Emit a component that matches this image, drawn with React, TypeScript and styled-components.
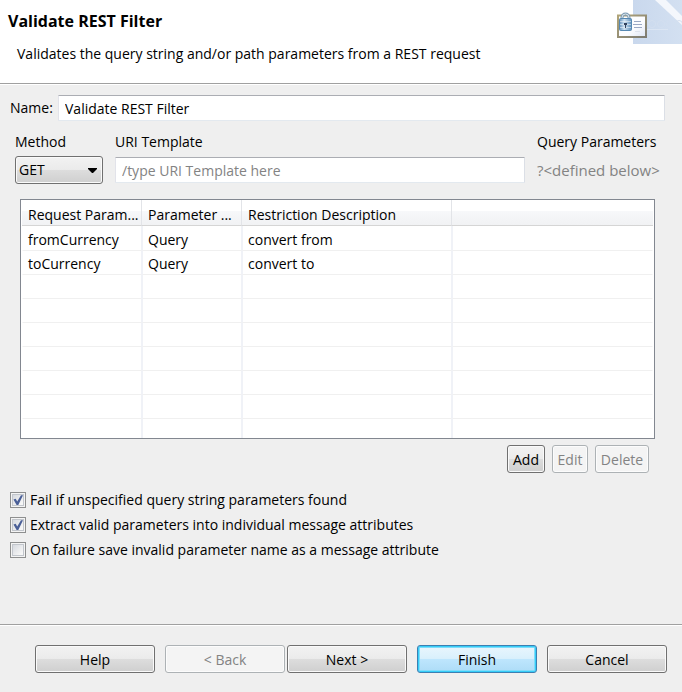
import React, { useState } from 'react';
import styled, { createGlobalStyle, css } from 'styled-components';

const GlobalStyle = createGlobalStyle`
  *, *::before, *::after { box-sizing: border-box; }
  body {
    margin: 0;
    background: #efefef;
    color: #000;
    font-family: 'Open Sans', 'Noto Sans', sans-serif;
    font-size: 14px;
    line-height: 20px;
  }
  button, input, select { font: inherit; color: inherit; margin: 0; }
`;

const Dialog = styled.main`
  display: flex;
  flex-direction: column;
  min-height: 100vh;
`;

const Header = styled.header`
  display: flex;
  justify-content: space-between;
  height: 84px;
  padding-left: 8px;
  background: #fff;
  border-bottom: 1px solid #a0a0a0;
`;

const Title = styled.h1`
  margin: 11px 0 13px;
  font-size: 16px;
  line-height: 20px;
  font-weight: 700;
`;

const Summary = styled.p`
  margin: 0;
  padding-left: 9px;
`;

const Banner = styled.svg`
  flex: none;
  width: 66px;
  height: 46px;
`;

const Content = styled.form`
  flex: 1;
  padding: 10px 0;
  border-top: 1px solid #fff;
`;

const TextField = styled.input`
  width: 100%;
  min-width: 0;
  height: 26px;
  padding: 0 6px;
  background: #fff;
  border: 1px solid #e2e3ea;
  border-top-color: #abadb3;
  border-right-color: #dbdfe6;
  border-bottom-color: #e3e9ef;
  border-radius: 1px;
  outline: none;
  &::placeholder { color: #838383; opacity: 1; }
`;

const NameRow = styled.div`
  display: flex;
  align-items: center;
  padding: 0 17px 0 10px;
`;

const NameLabel = styled.label`
  flex: none;
  width: 48px;
`;

const RequestGrid = styled.div`
  display: grid;
  grid-template-columns: 88px 1fr 128px;
  column-gap: 12px;
  row-gap: 4px;
  align-items: center;
  padding: 11px 17px 0 15px;
`;

const QueryHint = styled.span`
  font-size: 15px;
  color: #838383;
  white-space: nowrap;
`;

const glossy = css`
  background: linear-gradient(#f2f2f2 0, #ebebeb 48%, #dddddd 50%, #cfcfcf 100%);
  border: 1px solid #707070;
  box-shadow: inset 0 0 0 1px #fafafa;
`;

const SelectBox = styled.div`
  position: relative;
`;

const Select = styled.select`
  display: block;
  width: 100%;
  height: 28px;
  padding: 0 24px 0 3px;
  appearance: none;
  border-radius: 3px;
  outline: none;
  ${glossy}
`;

const SelectArrow = styled.svg`
  position: absolute;
  right: 6px;
  top: 12px;
  pointer-events: none;
`;

const TableFrame = styled.div`
  margin: 15px 27px 0 20px;
  padding: 0 1px;
  height: 240px;
  overflow: hidden;
  background: #fff;
  border: 1px solid #828790;
`;

const Table = styled.table`
  width: 100%;
  table-layout: fixed;
  border-collapse: separate;
  border-spacing: 0;
`;

const Column = styled.col<{ $width?: number }>`
  width: ${({ $width }) => ($width ? `${$width}px` : 'auto')};
`;

const HeadCell = styled.th`
  height: 26px;
  padding: 5px 0 0 6px;
  font-weight: 400;
  text-align: left;
  white-space: nowrap;
  background: linear-gradient(#fff 0, #fff 42%, #f7f8fa 44%, #f1f2f4 100%);
  border-right: 1px solid #e2e4e8;
  border-bottom: 1px solid #d5d5d5;
  &:last-child { border-right: 0; }
`;

const BodyCell = styled.td`
  height: 24px;
  padding: 3px 5px 0;
  border-left: 1px solid #f0f2f7;
  border-right: 1px solid #f0f2f7;
  border-bottom: 1px solid #f0f0f0;
  &:first-child { border-left-color: #fff; }
  &:last-child { border-right-color: #fff; }
  tr:first-child > & { height: 25px; padding-top: 4px; }
`;

const TableActions = styled.div`
  display: flex;
  justify-content: flex-end;
  gap: 7px;
  padding: 6px 33px 0 0;
`;

const Button = styled.button<{ $width: number; $primary?: boolean }>`
  flex: 0 1 ${({ $width }) => $width}px;
  height: 28px;
  padding: 2px 0 0;
  border-radius: 3px;
  outline: none;
  white-space: nowrap;
  ${glossy}
  ${({ $primary }) =>
    $primary &&
    css`
      background: linear-gradient(#e9f6fd 0, #d9f0fc 48%, #bee6fd 50%, #addcf7 100%);
      border-color: #3c7fb1;
      box-shadow: inset 0 0 0 1px #35cdf8, inset 0 0 0 2px #7fdcfa;
    `}
  &:disabled {
    color: #838383;
    background: #f4f4f4;
    border-color: #adb2b5;
    box-shadow: inset 0 0 0 1px #fcfcfc;
  }
`;

const Options = styled.div`
  display: flex;
  flex-direction: column;
  align-items: flex-start;
  gap: 5px;
  padding: 17px 10px 0;
`;

const Option = styled.label`
  display: flex;
  align-items: center;
  gap: 4px;
`;

const TickBox = styled.span`
  display: grid;
  flex: none;
  width: 16px;
  height: 16px;
  > * { grid-area: 1 / 1; }
`;

const Checkbox = styled.input`
  appearance: none;
  width: 16px;
  height: 16px;
  background: linear-gradient(135deg, #cfd3da, #f6f6f6 75%);
  border: 1px solid #8e8f8f;
  box-shadow: inset 0 0 0 1px #f4f4f4, inset 0 0 0 2px #c2c6cc;
  & + svg { visibility: hidden; pointer-events: none; }
  &:checked + svg { visibility: visible; }
`;

const Footer = styled.footer`
  display: flex;
  justify-content: flex-end;
  gap: 10px;
  height: 68px;
  padding: 20px 15px 0 35px;
  border-top: 1px solid #a0a0a0;
  box-shadow: inset 0 1px 0 #fff;
`;

const StepButtons = styled.div`
  display: flex;
  flex: 0 1 242px;
  gap: 2px;
`;

const parameters = [
  { name: 'fromCurrency', type: 'Query', restriction: 'convert from' },
  { name: 'toCurrency', type: 'Query', restriction: 'convert to' },
];
const blankRows = [0, 1, 2, 3, 4, 5, 6];

function FilterIcon() {
  return (
    <Banner viewBox="0 0 66 46" aria-hidden="true">
      <defs>
        <linearGradient id="sky" x1="0" y1="0" x2="1" y2="0">
          <stop offset="0" stopColor="#c9d8ed" />
          <stop offset="1" stopColor="#d3e0f1" />
        </linearGradient>
        <linearGradient id="card" x1="0" y1="0" x2="1" y2="1">
          <stop offset="0" stopColor="#fff" />
          <stop offset="0.6" stopColor="#fbfcff" />
          <stop offset="1" stopColor="#dde5f5" />
        </linearGradient>
        <linearGradient id="frame" x1="0" y1="0" x2="1" y2="1">
          <stop offset="0" stopColor="#b0a478" />
          <stop offset="1" stopColor="#7d7b72" />
        </linearGradient>
        <linearGradient id="lock" x1="0" y1="0" x2="1" y2="0">
          <stop offset="0" stopColor="#6593bd" />
          <stop offset="0.4" stopColor="#cfe2f1" />
          <stop offset="1" stopColor="#5d8fbb" />
        </linearGradient>
      </defs>
      <path d="M17 0h49v44H17z" fill="url(#sky)" />
      <path d="M39 0h11l16 16v9z" fill="#f4f7fc" />
      <g fill="none" stroke="#d3dff0">
        <circle cx="36" cy="24" r="3.5" />
        <circle cx="45" cy="24" r="3.5" />
        <circle cx="54" cy="24" r="3.5" />
        <circle cx="63" cy="24" r="3.5" />
        <path d="M31 29.500h21" stroke="#dbe5f3" />
      </g>
      <path d="M2 15.500h28V37H2z" fill="url(#card)" stroke="url(#frame)" strokeWidth="2" />
      <path d="M18 21.500h7M17 24.500h9M18 27.500h8" stroke="#9ba9c5" />
      <path d="M19 31.500h5" stroke="#dfe4ee" />
      <path d="M6 20v-2.500a3.500 3.500 0 0 1 7 0V20" fill="none" stroke="#7f9db5" strokeWidth="3" />
      <path d="M6 19v-1.500a3.500 3.500 0 0 1 7 0V19" fill="none" stroke="#dfe7ea" />
      <rect x="3.500" y="18.500" width="12" height="12" rx="1" fill="url(#lock)" stroke="#5688b2" />
      <path d="M4 21.500h11M4 24.500h11M4 27.500h11" stroke="#f0f6fb" strokeOpacity="0.55" />
      <path d="M8 23h3v2h-1v3H9v-3H8z" fill="#33435d" />
    </Banner>
  );
}

function CheckOption({ label, initial = false }: { label: string; initial?: boolean }) {
  const [checked, setChecked] = useState(initial);
  return (
    <Option>
      <TickBox>
        <Checkbox type="checkbox" checked={checked} onChange={(e) => setChecked(e.target.checked)} />
        <svg width="16" height="16" viewBox="0 0 16 16" aria-hidden="true">
          <path d="M3.500 7.500l2.200-.8 1.500 2.800L11 3.200h2L8.300 13H6.600z" fill="#4a5f97" />
        </svg>
      </TickBox>
      {label}
    </Option>
  );
}

export default function App() {
  return (
    <>
      <GlobalStyle />
      <Dialog>
        <Header>
          <div>
            <Title>Validate REST Filter</Title>
            <Summary>Validates the query string and/or path parameters from a REST request</Summary>
          </div>
          <FilterIcon />
        </Header>
        <Content onSubmit={(e) => e.preventDefault()}>
          <NameRow>
            <NameLabel htmlFor="name">Name:</NameLabel>
            <TextField id="name" defaultValue="Validate REST Filter" />
          </NameRow>
          <RequestGrid>
            <label htmlFor="method">Method</label>
            <label htmlFor="template">URI Template</label>
            <span>Query Parameters</span>
            <SelectBox>
              <Select id="method" defaultValue="GET">
                <option>GET</option>
                <option>POST</option>
                <option>PUT</option>
                <option>DELETE</option>
              </Select>
              <SelectArrow width="9" height="5" viewBox="0 0 9 5" aria-hidden="true">
                <path d="M0 0h9v1L5 5H4L0 1z" />
              </SelectArrow>
            </SelectBox>
            <TextField id="template" placeholder="/type URI Template here" />
            <QueryHint>?&lt;defined below&gt;</QueryHint>
          </RequestGrid>
          <TableFrame>
            <Table>
              <colgroup>
                <Column $width={120} />
                <Column $width={100} />
                <Column $width={210} />
                <Column />
              </colgroup>
              <thead>
                <tr>
                  <HeadCell>Request Param...</HeadCell>
                  <HeadCell>Parameter ...</HeadCell>
                  <HeadCell>Restriction Description</HeadCell>
                  <HeadCell />
                </tr>
              </thead>
              <tbody>
                {parameters.map((p) => (
                  <tr key={p.name}>
                    <BodyCell>{p.name}</BodyCell>
                    <BodyCell>{p.type}</BodyCell>
                    <BodyCell>{p.restriction}</BodyCell>
                    <BodyCell />
                  </tr>
                ))}
                {blankRows.map((row) => (
                  <tr key={row}>
                    <BodyCell />
                    <BodyCell />
                    <BodyCell />
                    <BodyCell />
                  </tr>
                ))}
              </tbody>
            </Table>
          </TableFrame>
          <TableActions>
            <Button type="button" $width={38}>Add</Button>
            <Button type="button" $width={36} disabled>Edit</Button>
            <Button type="button" $width={54} disabled>Delete</Button>
          </TableActions>
          <Options>
            <CheckOption label="Fail if unspecified query string parameters found" initial />
            <CheckOption label="Extract valid parameters into individual message attributes" initial />
            <CheckOption label="On failure save invalid parameter name as a message attribute" />
          </Options>
        </Content>
        <Footer>
          <Button type="button" $width={120}>Help</Button>
          <StepButtons>
            <Button type="button" $width={120} disabled>&lt; Back</Button>
            <Button type="button" $width={120}>Next &gt;</Button>
          </StepButtons>
          <Button type="button" $width={120} $primary>Finish</Button>
          <Button type="button" $width={120}>Cancel</Button>
        </Footer>
      </Dialog>
    </>
  );
}
